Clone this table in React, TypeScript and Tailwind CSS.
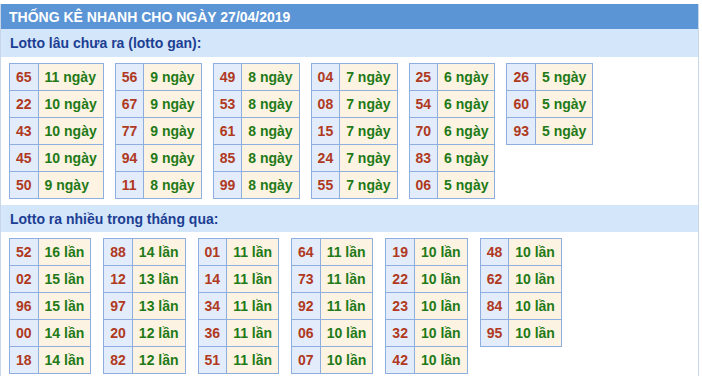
import React from 'react';

type Row = [string, string];

const ganTables: Row[][] = [
  [['65', '11 ngày'], ['22', '10 ngày'], ['43', '10 ngày'], ['45', '10 ngày'], ['50', '9 ngày']],
  [['56', '9 ngày'], ['67', '9 ngày'], ['77', '9 ngày'], ['94', '9 ngày'], ['11', '8 ngày']],
  [['49', '8 ngày'], ['53', '8 ngày'], ['61', '8 ngày'], ['85', '8 ngày'], ['99', '8 ngày']],
  [['04', '7 ngày'], ['08', '7 ngày'], ['15', '7 ngày'], ['24', '7 ngày'], ['55', '7 ngày']],
  [['25', '6 ngày'], ['54', '6 ngày'], ['70', '6 ngày'], ['83', '6 ngày'], ['06', '5 ngày']],
  [['26', '5 ngày'], ['60', '5 ngày'], ['93', '5 ngày']],
];

const nhieuTables: Row[][] = [
  [['52', '16 lần'], ['02', '15 lần'], ['96', '15 lần'], ['00', '14 lần'], ['18', '14 lần']],
  [['88', '14 lần'], ['12', '13 lần'], ['97', '13 lần'], ['20', '12 lần'], ['82', '12 lần']],
  [['01', '11 lần'], ['14', '11 lần'], ['34', '11 lần'], ['36', '11 lần'], ['51', '11 lần']],
  [['64', '11 lần'], ['73', '11 lần'], ['92', '11 lần'], ['06', '10 lần'], ['07', '10 lần']],
  [['19', '10 lần'], ['22', '10 lần'], ['23', '10 lần'], ['32', '10 lần'], ['42', '10 lần']],
  [['48', '10 lần'], ['62', '10 lần'], ['84', '10 lần'], ['95', '10 lần']],
];

function LotoTable({ rows }: { rows: Row[] }) {
  return (
    <table className="border-collapse">
      <tbody>
        {rows.map(([num, val]) => (
          <tr key={num} className="h-[27px]">
            <td className="border border-[#8eaee0] bg-[#e2ecfa] px-[6px] py-0 text-[#b0391f]">{num}</td>
            <td className="border border-[#8eaee0] bg-[#fdf3e2] px-[6px] py-0 text-[#1f7a17]">{val}</td>
          </tr>
        ))}
      </tbody>
    </table>
  );
}

export default function App() {
  return (
    <div className="bg-white pt-[4px] font-['Liberation_Sans',Arial,sans-serif] text-[14px] font-bold leading-4">
      <div className="w-[699px] border-x border-[#c9d6e8]">
        <div className="flex h-[25px] items-center bg-[#5b95d5] px-[8px] text-white">
          THỐNG KÊ NHANH CHO NGÀY 27/04/2019
        </div>
        <div className="flex h-[28px] items-center bg-[#d4e6f9] px-[9px] text-[#1c3e93]">
          Lotto lâu chưa ra (lotto gan):
        </div>
        <div className="flex items-start gap-[11px] px-[8px] pt-[6px] pb-[6px]">
          {ganTables.map((t, i) => (
            <LotoTable key={i} rows={t} />
          ))}
        </div>
        <div className="flex h-[27px] items-center bg-[#d4e6f9] px-[9px] text-[#1c3e93]">
          Lotto ra nhiều trong tháng qua:
        </div>
        <div className="flex items-start gap-[12px] px-[8px] pt-[6px] pb-[4px]">
          {nhieuTables.map((t, i) => (
            <LotoTable key={i} rows={t} />
          ))}
        </div>
      </div>
    </div>
  );
}
